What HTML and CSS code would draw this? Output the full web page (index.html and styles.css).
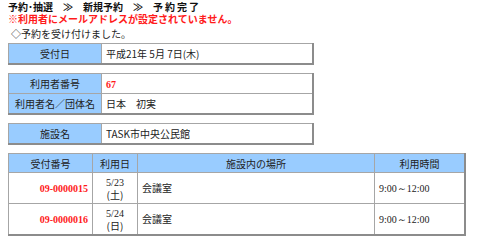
FILE: index.html
```html
<!DOCTYPE html>
<html lang="ja">
<head>
  <meta charset="UTF-8">
  <title>予約完了</title>
  <link rel="stylesheet" href="styles.css">
</head>
<body>

  <div class="crumb">
    <span>予約･抽選</span><span class="sep">≫</span><span>新規予約</span><span class="sep">≫</span><span class="last">予約完了</span>
  </div>
  <div class="warn">※利用者にメールアドレスが設定されていません。</div>
  <div class="msg">◇予約を受け付けました。</div>

  <table class="info">
    <tr>
      <th>受付日</th>
      <td>平成21年 5月 7日(木)</td>
    </tr>
  </table>

  <table class="info">
    <tr>
      <th>利用者番号</th>
      <td><span class="num red">67</span></td>
    </tr>
    <tr>
      <th>利用者名／団体名</th>
      <td>日本　初実</td>
    </tr>
  </table>

  <table class="info">
    <tr>
      <th>施設名</th>
      <td>TASK市中央公民館</td>
    </tr>
  </table>

  <table class="list">
    <tr>
      <th class="c-no">受付番号</th>
      <th class="c-date">利用日</th>
      <th class="c-place">施設内の場所</th>
      <th class="c-time">利用時間</th>
    </tr>
    <tr>
      <td class="c-no"><span class="num red">09-0000015</span></td>
      <td class="c-date"><span class="num">5/23</span><br>(土)</td>
      <td>会議室</td>
      <td><span class="num">9:00～12:00</span></td>
    </tr>
    <tr>
      <td class="c-no"><span class="num red">09-0000016</span></td>
      <td class="c-date"><span class="num">5/24</span><br>(日)</td>
      <td>会議室</td>
      <td><span class="num">9:00～12:00</span></td>
    </tr>
  </table>

</body>
</html>
```

FILE: styles.css
```css
body, html {
  margin: 0;
  padding: 0;
  background-color: #ffffff;
  color: #222;
  font-family: 'Noto Sans CJK JP', sans-serif;
  font-size: 10px;
}

body {
  padding: 0 8px;
}

.crumb {
  display: flex;
  padding-top: 1px;
  line-height: 12px;
  font-weight: bold;
  color: #111;
}

.crumb .sep {
  margin: 0 10px;
}

.crumb .last {
  letter-spacing: 2px;
}

.warn {
  line-height: 11px;
  font-weight: bold;
  color: #ff1a1a;
}

.msg {
  margin-top: 4px;
  padding-left: 3px;
  line-height: 11px;
}

table {
  border-collapse: collapse;
  border-top: 1px solid #a6a6a6;
  border-left: 1px solid #a6a6a6;
  border-right: 2px solid #8c8c8c;
  border-bottom: 2px solid #8c8c8c;
}

th, td {
  border: 1px solid #a6a6a6;
  padding: 0 4px;
  font-weight: normal;
}

th {
  background-color: #99ccff;
  text-align: center;
}

.info {
  width: 306px;
  margin-top: 8px;
}

.info:first-of-type {
  margin-top: 4px;
}

.info th {
  width: 84px;
  height: 19px;
}

.info td {
  height: 19px;
}

.list {
  width: 458px;
  margin-top: 8px;
}

.list th {
  height: 18px;
}

.list td {
  height: 30px;
  line-height: 12px;
}

.c-no {
  width: 75px;
  text-align: right;
}

.list th.c-no {
  text-align: center;
}

.c-date {
  width: 36px;
  text-align: center;
}

.c-time {
  width: 81px;
}

.num {
  font-family: 'Liberation Serif', serif;
  font-size: 10px;
}

.red {
  color: #ff1a1a;
  font-weight: bold;
}
```
